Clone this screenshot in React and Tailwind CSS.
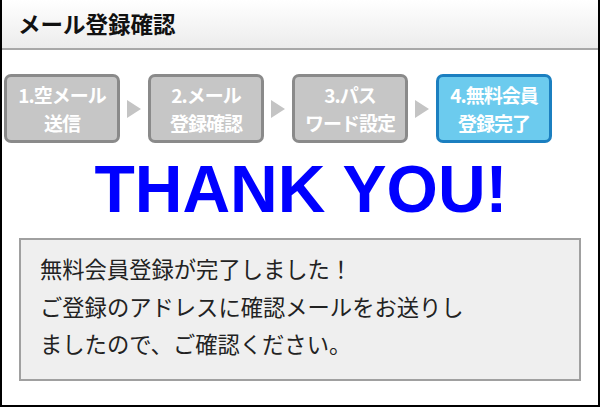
import React from "react"

const steps = [
  { line1: "1.空メール", line2: "送信", active: false },
  { line1: "2.メール", line2: "登録確認", active: false },
  { line1: "3.パス", line2: "ワード設定", active: false },
  { line1: "4.無料会員", line2: "登録完了", active: true },
]

function Arrow() {
  return (
    <svg width="14" height="20" viewBox="0 0 14 20" className="shrink-0">
      <polygon points="0,1 14,10 0,19" fill="#c4c4c4" />
    </svg>
  )
}

export default function App() {
  return (
    <div
      className="w-[600px] h-[407px] bg-white border-l-2 border-r-2 border-b-2 border-black overflow-hidden flex flex-col"
      style={{ fontFamily: '"Noto Sans CJK JP", "Liberation Sans", sans-serif' }}
    >
      {/* HEADER */}
      <div className="h-[50px] shrink-0 bg-gradient-to-b from-white to-[#ececec] border-b-2 border-[#a8a8a8] flex items-center pl-[16px]">
        <h1 className="text-[22.5px] font-bold text-[#111]">メール登録確認</h1>
      </div>

      {/* STEPS */}
      <div className="flex items-center gap-[7px] pl-[2px] mt-[24px]">
        {steps.map((s, i) => (
          <React.Fragment key={i}>
            {i > 0 && <Arrow />}
            <div
              className={
                "w-[116px] h-[69px] rounded-[7px] border-[3px] flex flex-col items-center justify-center text-white font-bold text-[19px] leading-[27.5px] tracking-[-1px] " +
                (s.active ? "bg-[#6ccbee] border-[#1b7fc0]" : "bg-[#c6c6c6] border-[#8a8a8a]")
              }
            >
              <span>{s.line1}</span>
              <span>{s.line2}</span>
            </div>
          </React.Fragment>
        ))}
      </div>

      {/* THANK YOU */}
      <div className="flex justify-center mt-[10px]">
        <div
          className="text-[#0000ff] font-bold text-[66px] leading-[72px] pl-[2px]"
          style={{ fontFamily: '"Liberation Sans", Arial, sans-serif' }}
        >
          THANK YOU!
        </div>
      </div>

      {/* MESSAGE */}
      <div className="mx-[17px] mt-[13px] h-[143px] bg-[#efefef] border-2 border-[#a0a0a0] pl-[19px] pt-[10px] text-[22.3px] leading-[37.5px] text-[#222]">
        無料会員登録が完了しました！
        <br />
        ご登録のアドレスに確認メールをお送りし
        <br />
        ましたので、ご確認ください。
      </div>
    </div>
  )
}
